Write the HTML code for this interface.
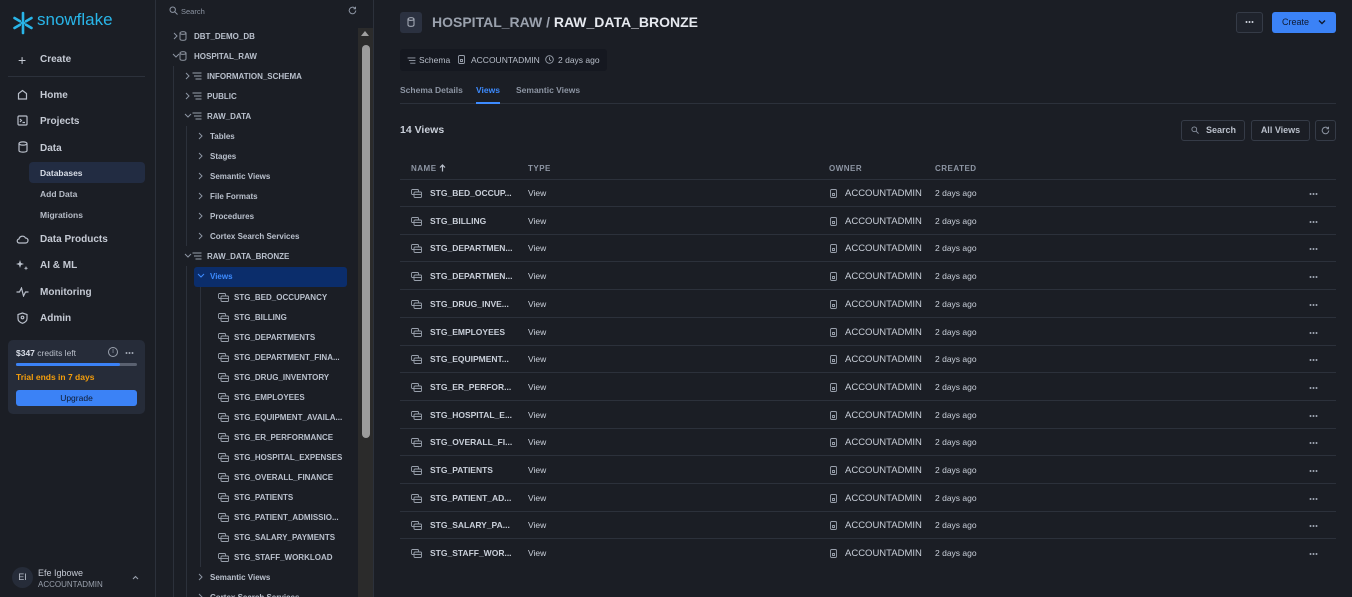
<!DOCTYPE html>
<html><head><meta charset="utf-8"><style>
*{margin:0;padding:0;box-sizing:border-box}
html,body{width:1352px;height:597px;overflow:hidden}
body{background:#1b1e25;font-family:"Liberation Sans",sans-serif;color:#c9ced8;position:relative;font-size:9px}
.a{position:absolute;white-space:nowrap}
.nav{font-size:10px;font-weight:bold;color:#c5cad4}
.sub{font-size:8.5px;font-weight:bold;color:#b7bdc8}
.tr{font-size:8px;font-weight:bold;color:#b9c0cc}
.th{font-size:8px;font-weight:bold;color:#8d95a3;letter-spacing:.5px}
.td{font-size:8.5px;font-weight:bold;color:#c9cfd9}
.line{position:absolute;height:1px;background:#2c313b}
svg{position:absolute}
.dots{position:absolute;width:9px;height:2px;background:radial-gradient(circle,#9aa1ad 0.9px,transparent 1.1px) 0 0/3px 2px repeat-x}
</style></head><body>
<!-- left nav -->
<div class="a" style="left:0;top:0;width:156px;height:597px;border-right:1px solid #2c313b"></div>
<svg style="left:11px;top:11px" width="24" height="24" viewBox="0 0 24 24" stroke="#29b5e8" stroke-width="2.6" stroke-linecap="round" fill="none"><path d="M12 2v7M12 15v7M3.5 7l5.5 3.2M15 13.8l5.5 3.2M3.5 17l5.5-3.2M15 10.2l5.5-3.2"/><path d="M12 10l2 2-2 2-2-2z" fill="#29b5e8" stroke-width="1"/></svg>
<div class="a" style="left:37px;top:10px;font-size:17px;color:#29b5e8">snowflake</div>
<div class="a" style="left:18px;top:52px;font-size:14px;color:#c5cad4">+</div>
<div class="a nav" style="left:40px;top:54px">Create</div>
<div class="line" style="left:8px;top:76px;width:137px"></div>
<svg style="left:17px;top:89px" width="11" height="11" viewBox="0 0 11 11" fill="none" stroke="#b9bfca" stroke-width="1.2"><path d="M1.5 10V4.5L5.5 1.5l4 3V10z"/></svg>
<div class="a nav" style="left:40px;top:90px">Home</div>
<svg style="left:17px;top:115px" width="11" height="11" viewBox="0 0 11 11" fill="none" stroke="#b9bfca" stroke-width="1.2"><rect x="1" y="1" width="9" height="9" rx="1"/><path d="M3 4l1.5 1.5L3 7M5.5 7.5h2.5"/></svg>
<div class="a nav" style="left:40px;top:116px">Projects</div>
<svg style="left:18px;top:141px" width="10" height="12" viewBox="0 0 10 12" fill="none" stroke="#b9bfca" stroke-width="1.2"><ellipse cx="5" cy="2.5" rx="4" ry="1.6"/><path d="M1 2.5v7c0 1 1.8 1.6 4 1.6s4-.6 4-1.6v-7"/></svg>
<div class="a nav" style="left:40px;top:143px">Data</div>
<div class="a" style="left:29px;top:162px;width:116px;height:21px;background:#222c42;border-radius:4px"></div>
<div class="a sub" style="left:40px;top:168px;color:#d9dee8">Databases</div>
<div class="a sub" style="left:40px;top:189px">Add Data</div>
<div class="a sub" style="left:40px;top:210px">Migrations</div>
<svg style="left:16px;top:234px" width="13" height="10" viewBox="0 0 13 10" fill="none" stroke="#b9bfca" stroke-width="1.2"><path d="M3.5 9h6a2.5 2.5 0 0 0 0-5 3.5 3.5 0 0 0-6.5 1A2 2 0 0 0 3.5 9z"/></svg>
<div class="a nav" style="left:40px;top:234px">Data Products</div>
<svg style="left:16px;top:259px" width="13" height="12" viewBox="0 0 13 12" fill="#b9bfca"><path d="M4 1l1 3 3 1-3 1-1 3-1-3-3-1 3-1z"/><path d="M10 7l.6 1.6 1.6.6-1.6.6L10 11.4l-.6-1.6-1.6-.6 1.6-.6z"/></svg>
<div class="a nav" style="left:40px;top:260px">AI &amp; ML</div>
<svg style="left:16px;top:287px" width="13" height="10" viewBox="0 0 13 10" fill="none" stroke="#b9bfca" stroke-width="1.2"><path d="M0.5 5h3l2-4 2 8 2-4h3"/></svg>
<div class="a nav" style="left:40px;top:287px">Monitoring</div>
<svg style="left:17px;top:312px" width="11" height="12" viewBox="0 0 11 12" fill="none" stroke="#b9bfca" stroke-width="1.2"><path d="M5.5 1L1 2.5v4c0 2.5 2 4 4.5 4.8 2.5-.8 4.5-2.3 4.5-4.8v-4z"/><circle cx="5.5" cy="5.5" r="1.3"/></svg>
<div class="a nav" style="left:40px;top:313px">Admin</div>
<div class="a" style="left:8px;top:340px;width:137px;height:74px;background:#262c39;border-radius:5px"></div>
<div class="a" style="left:16px;top:348px;font-size:8.5px;color:#b9bfca"><b style="color:#d9dee8">$347</b> credits left</div>
<div class="a" style="left:108px;top:347px;width:10px;height:10px;border:1px solid #9aa1ad;border-radius:50%;font-size:7px;text-align:center;line-height:8px;color:#9aa1ad">i</div>
<div class="dots" style="left:125px;top:352px"></div>
<div class="a" style="left:16px;top:363px;width:121px;height:3px;background:#5a6170;border-radius:2px"></div>
<div class="a" style="left:16px;top:363px;width:104px;height:3px;background:#3b82f6;border-radius:2px"></div>
<div class="a" style="left:16px;top:372px;font-size:8.5px;font-weight:bold;color:#f59e0b">Trial ends in 7 days</div>
<div class="a" style="left:16px;top:390px;width:121px;height:16px;background:#3b82f6;border-radius:3px;font-size:8.5px;text-align:center;line-height:16px;color:#0f1a30">Upgrade</div>
<div class="a" style="left:12px;top:567px;width:21px;height:21px;border-radius:50%;background:#262c39;font-size:9px;text-align:center;line-height:21px;color:#b9bfca">EI</div>
<div class="a" style="left:38px;top:568px;font-size:9px;color:#c5cad4">Efe Igbowe</div>
<div class="a" style="left:38px;top:580px;font-size:8px;color:#9aa1ad">ACCOUNTADMIN</div>
<svg style="left:132px;top:575px" width="7" height="5" viewBox="0 0 7 5" fill="none" stroke="#9aa1ad" stroke-width="1.1"><path d="M1 4l2.5-2.5L6 4"/></svg>

<!-- tree panel -->
<div class="a" style="left:373px;top:0;width:1px;height:597px;background:#2c313b"></div>
<svg style="left:169px;top:6px" width="9" height="9" viewBox="0 0 9 9" fill="none" stroke="#8d95a3" stroke-width="1"><circle cx="3.7" cy="3.7" r="2.7"/><path d="M5.8 5.8L8.5 8.5"/></svg>
<div class="a" style="left:181px;top:7px;font-size:7.5px;color:#8d95a3">Search</div>
<svg style="left:348px;top:6px" width="9" height="9" viewBox="0 0 9 9" fill="none" stroke="#8d95a3" stroke-width="1"><path d="M7.8 4.5A3.3 3.3 0 1 1 6.8 2.1M7.5 0.8v2h-2"/></svg>
<div class="a" style="left:358px;top:28px;width:15px;height:569px;background:#2b2b2b"></div>
<div class="a" style="left:362px;top:45px;width:8px;height:393px;background:#9c9c9c;border-radius:4px"></div>
<div class="a" style="left:361px;top:31px;width:0;height:0;border-left:4.5px solid transparent;border-right:4.5px solid transparent;border-bottom:5px solid #a0a0a0"></div>
<div class="a" style="left:173px;top:66px;width:1px;height:531px;background:#2c313b"></div>
<div class="a" style="left:186px;top:126px;width:1px;height:120px;background:#2c313b"></div>
<div class="a" style="left:186px;top:266px;width:1px;height:331px;background:#2c313b"></div>
<div class="a" style="left:200px;top:287px;width:1px;height:280px;background:#2c313b"></div>
<div class="a" style="left:194px;top:267px;width:153px;height:20px;background:#0b2d6b;border-radius:3px"></div>
<div id="tree"></div>

<!-- main -->
<div class="a" style="left:400px;top:12px;width:22px;height:21px;background:#2b3140;border-radius:3px"></div>
<svg style="left:407px;top:17px" width="8" height="10" viewBox="0 0 8 10" fill="none" stroke="#b9bfca" stroke-width="0.9"><ellipse cx="4" cy="2" rx="3" ry="1.3"/><path d="M1 2v6c0 .7 1.3 1.3 3 1.3s3-.6 3-1.3V2"/></svg>
<div class="a" style="left:432px;top:14px;font-size:14px;font-weight:bold;color:#9aa1ad">HOSPITAL_RAW / <span style="color:#e6e9ef">RAW_DATA_BRONZE</span></div>
<div class="a" style="left:1236px;top:12px;width:27px;height:21px;border:1px solid #353b47;border-radius:3px;background:#1f232c"></div>
<div class="dots" style="left:1245px;top:21px;background-image:radial-gradient(circle,#c5cad4 0.9px,transparent 1.1px)"></div>
<div class="a" style="left:1272px;top:12px;width:64px;height:21px;background:#3b82f6;border-radius:3px;font-size:9px;color:#0f1a30;line-height:21px;padding-left:10px">Create</div>
<svg style="left:1318px;top:19px" width="8" height="6" viewBox="0 0 8 6" fill="none" stroke="#0f1a30" stroke-width="1.4"><path d="M1 1.5l3 3 3-3"/></svg>
<div class="a" style="left:400px;top:49px;width:207px;height:22px;background:#151820;border-radius:3px"></div>
<svg style="left:407px;top:57px" width="9" height="7" viewBox="0 0 10 8" fill="none" stroke="#9aa1ad" stroke-width="1"><path d="M.5 1h9M2 4h7.5M3.5 7h6"/></svg>
<div class="a" style="left:419px;top:55px;font-size:8.5px;color:#b9bfca">Schema</div>
<svg style="left:458px;top:55px" width="7" height="9" viewBox="0 0 7 9" fill="none" stroke="#9aa1ad" stroke-width="0.9"><rect x="0.5" y="0.5" width="6" height="8" rx="1.2"/><path d="M2.5 4.5h2v2h-2z"/></svg>
<div class="a" style="left:471px;top:55px;font-size:8.5px;color:#b9bfca">ACCOUNTADMIN</div>
<svg style="left:545px;top:55px" width="9" height="9" viewBox="0 0 9 9" fill="none" stroke="#9aa1ad" stroke-width="0.9"><circle cx="4.5" cy="4.5" r="3.8"/><path d="M4.5 2.2v2.5l1.6 1"/></svg>
<div class="a" style="left:558px;top:55px;font-size:8.5px;color:#b9bfca">2 days ago</div>
<div class="a" style="left:400px;top:85px;font-size:8.5px;font-weight:bold;color:#8d95a3">Schema Details</div>
<div class="a" style="left:476px;top:85px;font-size:8.5px;font-weight:bold;color:#3d8bff">Views</div>
<div class="a" style="left:516px;top:85px;font-size:8.5px;font-weight:bold;color:#8d95a3">Semantic Views</div>
<div class="line" style="left:400px;top:103px;width:936px"></div>
<div class="a" style="left:476px;top:102px;width:24px;height:2px;background:#3d8bff"></div>
<div class="a" style="left:400px;top:124px;font-size:10.5px;font-weight:bold;color:#c9cfd9">14 Views</div>
<div class="a" style="left:1181px;top:120px;width:64px;height:21px;border:1px solid #353b47;border-radius:3px;font-size:9px;line-height:19px;padding-left:24px;color:#b9bfca;font-weight:bold">Search</div>
<svg style="left:1191px;top:126px" width="8" height="8" viewBox="0 0 9 9" fill="none" stroke="#8d95a3" stroke-width="1"><circle cx="3.7" cy="3.7" r="2.7"/><path d="M5.8 5.8L8.5 8.5"/></svg>
<div class="a" style="left:1251px;top:120px;width:59px;height:21px;border:1px solid #353b47;border-radius:3px;font-size:9px;line-height:19px;text-align:center;color:#b9bfca;font-weight:bold">All Views</div>
<div class="a" style="left:1315px;top:120px;width:21px;height:21px;border:1px solid #353b47;border-radius:3px"></div>
<svg style="left:1321px;top:126px" width="9" height="9" viewBox="0 0 9 9" fill="none" stroke="#8d95a3" stroke-width="1"><path d="M7.8 4.5A3.3 3.3 0 1 1 6.8 2.1M7.5 0.8v2h-2"/></svg>
<div class="a th" style="left:411px;top:164px">NAME</div>
<svg style="left:439px;top:164px" width="7" height="8" viewBox="0 0 7 8" fill="none" stroke="#b9bfca" stroke-width="1.2"><path d="M3.5 7.5V1M1 3.5l2.5-2.5L6 3.5"/></svg>
<div class="a th" style="left:528px;top:164px">TYPE</div>
<div class="a th" style="left:829px;top:164px">OWNER</div>
<div class="a th" style="left:935px;top:164px">CREATED</div>
<div id="rows"></div>
<script>
var t=[[172,36,0,1,'DBT_DEMO_DB','db'],[172,56,1,1,'HOSPITAL_RAW','db'],[184,76,0,1,'INFORMATION_SCHEMA','sc'],[184,96,0,1,'PUBLIC','sc'],[184,116,1,1,'RAW_DATA','sc'],[197,136,0,0,'Tables'],[197,156,0,0,'Stages'],[197,176,0,0,'Semantic Views'],[197,196,0,0,'File Formats'],[197,216,0,0,'Procedures'],[197,236,0,0,'Cortex Search Services'],[184,256,1,1,'RAW_DATA_BRONZE','sc'],[197,276,1,0,'Views','v'],[197,577,0,0,'Semantic Views'],[197,597,0,0,'Cortex Search Services']];
var v=['STG_BED_OCCUPANCY','STG_BILLING','STG_DEPARTMENTS','STG_DEPARTMENT_FINA...','STG_DRUG_INVENTORY','STG_EMPLOYEES','STG_EQUIPMENT_AVAILA...','STG_ER_PERFORMANCE','STG_HOSPITAL_EXPENSES','STG_OVERALL_FINANCE','STG_PATIENTS','STG_PATIENT_ADMISSIO...','STG_SALARY_PAYMENTS','STG_STAFF_WORKLOAD'];
var h='';
var view='<svg style="left:X;top:Y" width="11" height="9" viewBox="0 0 11 9" fill="none" stroke="#9aa1ad" stroke-width="0.9"><rect x="0.5" y="0.5" width="7" height="5" rx="1"/><rect x="3" y="3" width="7.5" height="5.5" rx="1" fill="#1b1e25"/><path d="M3 5.5h7.5"/></svg>';
var right='<path d="M2 1l3 3-3 3"/>',down='<path d="M1 2l3 3 3-3"/>';
t.forEach(function(r){var x=r[0],y=r[1];var col=r[5]=='v'?'#3d8bff':'#8d95a3';
h+='<svg style="left:'+x+'px;top:'+(y-4)+'px" width="8" height="8" viewBox="0 0 8 8" fill="none" stroke="'+col+'" stroke-width="1">'+(r[2]?down:right)+'</svg>';
var tx=x+13;
if(r[5]=='db'){h+='<svg style="left:'+(x+7)+'px;top:'+(y-5)+'px" width="8" height="10" viewBox="0 0 8 10" fill="none" stroke="#9aa1ad" stroke-width="0.9"><ellipse cx="4" cy="2" rx="3" ry="1.3"/><path d="M1 2v6c0 .7 1.3 1.3 3 1.3s3-.6 3-1.3V2"/></svg>';tx=x+22;}
if(r[5]=='sc'){h+='<svg style="left:'+(x+8)+'px;top:'+(y-4)+'px" width="10" height="8" viewBox="0 0 10 8" fill="none" stroke="#9aa1ad" stroke-width="0.9"><path d="M.5 1h9M2 4h7.5M3.5 7h6"/></svg>';tx=x+23;}
h+='<div class="a tr" style="left:'+tx+'px;top:'+(y-4)+'px'+(r[5]=='v'?';color:#3d8bff':'')+'">'+r[4]+'</div>';});
v.forEach(function(n,i){var y=297+i*20;h+=view.replace('X',(218)+'px').replace('Y',(y-4)+'px')+'<div class="a tr" style="left:234px;top:'+(y-4)+'px">'+n+'</div>';});
document.getElementById('tree').innerHTML=h;
var n=['STG_BED_OCCUP...','STG_BILLING','STG_DEPARTMEN...','STG_DEPARTMEN...','STG_DRUG_INVE...','STG_EMPLOYEES','STG_EQUIPMENT...','STG_ER_PERFOR...','STG_HOSPITAL_E...','STG_OVERALL_FI...','STG_PATIENTS','STG_PATIENT_AD...','STG_SALARY_PA...','STG_STAFF_WOR...'];
var g='<div class="line" style="left:400px;top:179px;width:936px"></div>';
n.forEach(function(s,i){var y=Math.round(193+i*27.7);
g+=view.replace('X','411px').replace('Y',(y-4)+'px');
g+='<div class="a td" style="left:430px;top:'+(y-5)+'px">'+s+'</div>';
g+='<div class="a td" style="left:528px;top:'+(y-5)+'px;font-weight:normal">View</div>';
g+='<svg style="left:830px;top:'+(y-4)+'px" width="7" height="9" viewBox="0 0 7 9" fill="none" stroke="#9aa1ad" stroke-width="0.9"><rect x="0.5" y="0.5" width="6" height="8" rx="1.2"/><path d="M2.5 4.5h2v2h-2z"/></svg>';
g+='<div class="a" style="left:845px;top:'+(y-5)+'px;font-size:9.5px;color:#c9cfd9">ACCOUNTADMIN</div>';
g+='<div class="a" style="left:935px;top:'+(y-5)+'px;font-size:8.5px;color:#c9cfd9">2 days ago</div>';
g+='<div class="dots" style="left:1309px;top:'+y+'px"></div>';
if(i<13)g+='<div class="line" style="left:400px;top:'+(y+13)+'px;width:936px"></div>';});
document.getElementById('rows').innerHTML=g;
</script>
</body></html>
